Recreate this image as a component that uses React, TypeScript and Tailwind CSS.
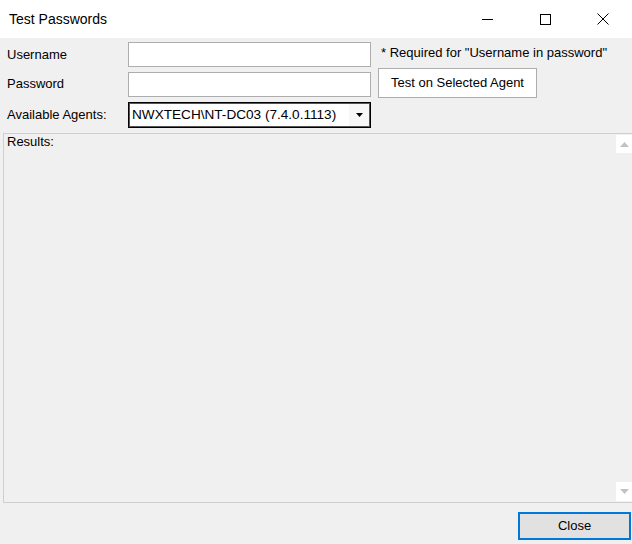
export default function App() {
    return (
        <div className="w-[632px] h-[544px] overflow-hidden bg-[#f0f0f0] text-black font-['Liberation_Sans',Arial,sans-serif]">
            {/* title bar */}
            <div className="h-[38px] bg-white flex items-center">
                <span className="pl-[9px] text-[14px] flex-1">Test Passwords</span>
                <div className="flex items-center h-full">
                    <div className="w-[58px] h-full flex items-center justify-center">
                        <svg width="11" height="11" viewBox="0 0 11 11"><path d="M0 5.5h11" stroke="#000" strokeWidth="1" /></svg>
                    </div>
                    <div className="w-[58px] h-full flex items-center justify-center">
                        <svg width="11" height="11" viewBox="0 0 11 11"><rect x="0.5" y="0.5" width="10" height="10" fill="none" stroke="#000" strokeWidth="1" /></svg>
                    </div>
                    <div className="w-[58px] h-full flex items-center justify-center">
                        <svg width="12" height="12" viewBox="0 0 12 12"><path d="M0.5 0.5l11 11M11.5 0.5l-11 11" stroke="#000" strokeWidth="1" /></svg>
                    </div>
                </div>
            </div>

            <div className="pt-[4px] text-[13px]">
                {/* username row */}
                <div className="flex h-[25px]">
                    <div className="w-[128px] pl-[7px] flex items-center">Username</div>
                    <div className="w-[243px] bg-white border border-[#adadad]" />
                    <div className="pl-[10px] pt-[3px] leading-[15px]">* Required for "Username in password"</div>
                </div>

                {/* password row */}
                <div className="flex h-[30px] mt-[1px] items-center">
                    <div className="w-[128px] pl-[7px] flex items-center pt-[1px]">Password</div>
                    <div className="w-[243px] h-[25px] mt-[2px] bg-white border border-[#adadad]" />
                    <button className="ml-[7px] w-[159px] h-[30px] bg-white border border-[#adadad] text-[13px]">
                        Test on Selected Agent
                    </button>
                </div>

                {/* agents row */}
                <div className="flex h-[26px] mt-[4px]">
                    <div className="w-[128px] pl-[7px] flex items-center">Available Agents:</div>
                    <div className="w-[243px] bg-white border border-black shadow-[inset_0_0_0_1px_#555] flex items-center">
                        <span className="pl-[3px] flex-1 text-[13.6px] whitespace-nowrap">NWXTECH\NT-DC03 (7.4.0.1113)</span>
                        <div className="w-[20px] h-[22px] mr-[1px] bg-[#f7f7f7] flex items-center justify-center">
                            <svg width="7" height="4" viewBox="0 0 7 4"><path d="M0 0h7L3.5 4z" fill="#000" /></svg>
                        </div>
                    </div>
                </div>

                {/* results */}
                <div className="mt-[5px] ml-[3px] w-[631px] h-[370px] border border-[#cfcfcf] flex">
                    <div className="flex-1 pl-[3px] leading-[15px]">Results:</div>
                    <div className="w-[17px] flex flex-col justify-between py-[1px]">
                        <div className="h-[18px] bg-white flex items-center justify-center">
                            <svg width="9" height="5" viewBox="0 0 9 5"><path d="M0 5L4.5 0L9 5z" fill="#c2c2c2" /></svg>
                        </div>
                        <div className="h-[19px] bg-white flex items-center justify-center">
                            <svg width="9" height="5" viewBox="0 0 9 5"><path d="M0 0h9L4.5 5z" fill="#c2c2c2" /></svg>
                        </div>
                    </div>
                </div>

                {/* footer */}
                <div className="flex justify-end mt-[9px] pr-[1px]">
                    <button className="w-[113px] h-[28px] bg-[#e1e1e1] border-2 border-[#0078d7] text-[13px]">
                        Close
                    </button>
                </div>
            </div>
        </div>
    );
}
